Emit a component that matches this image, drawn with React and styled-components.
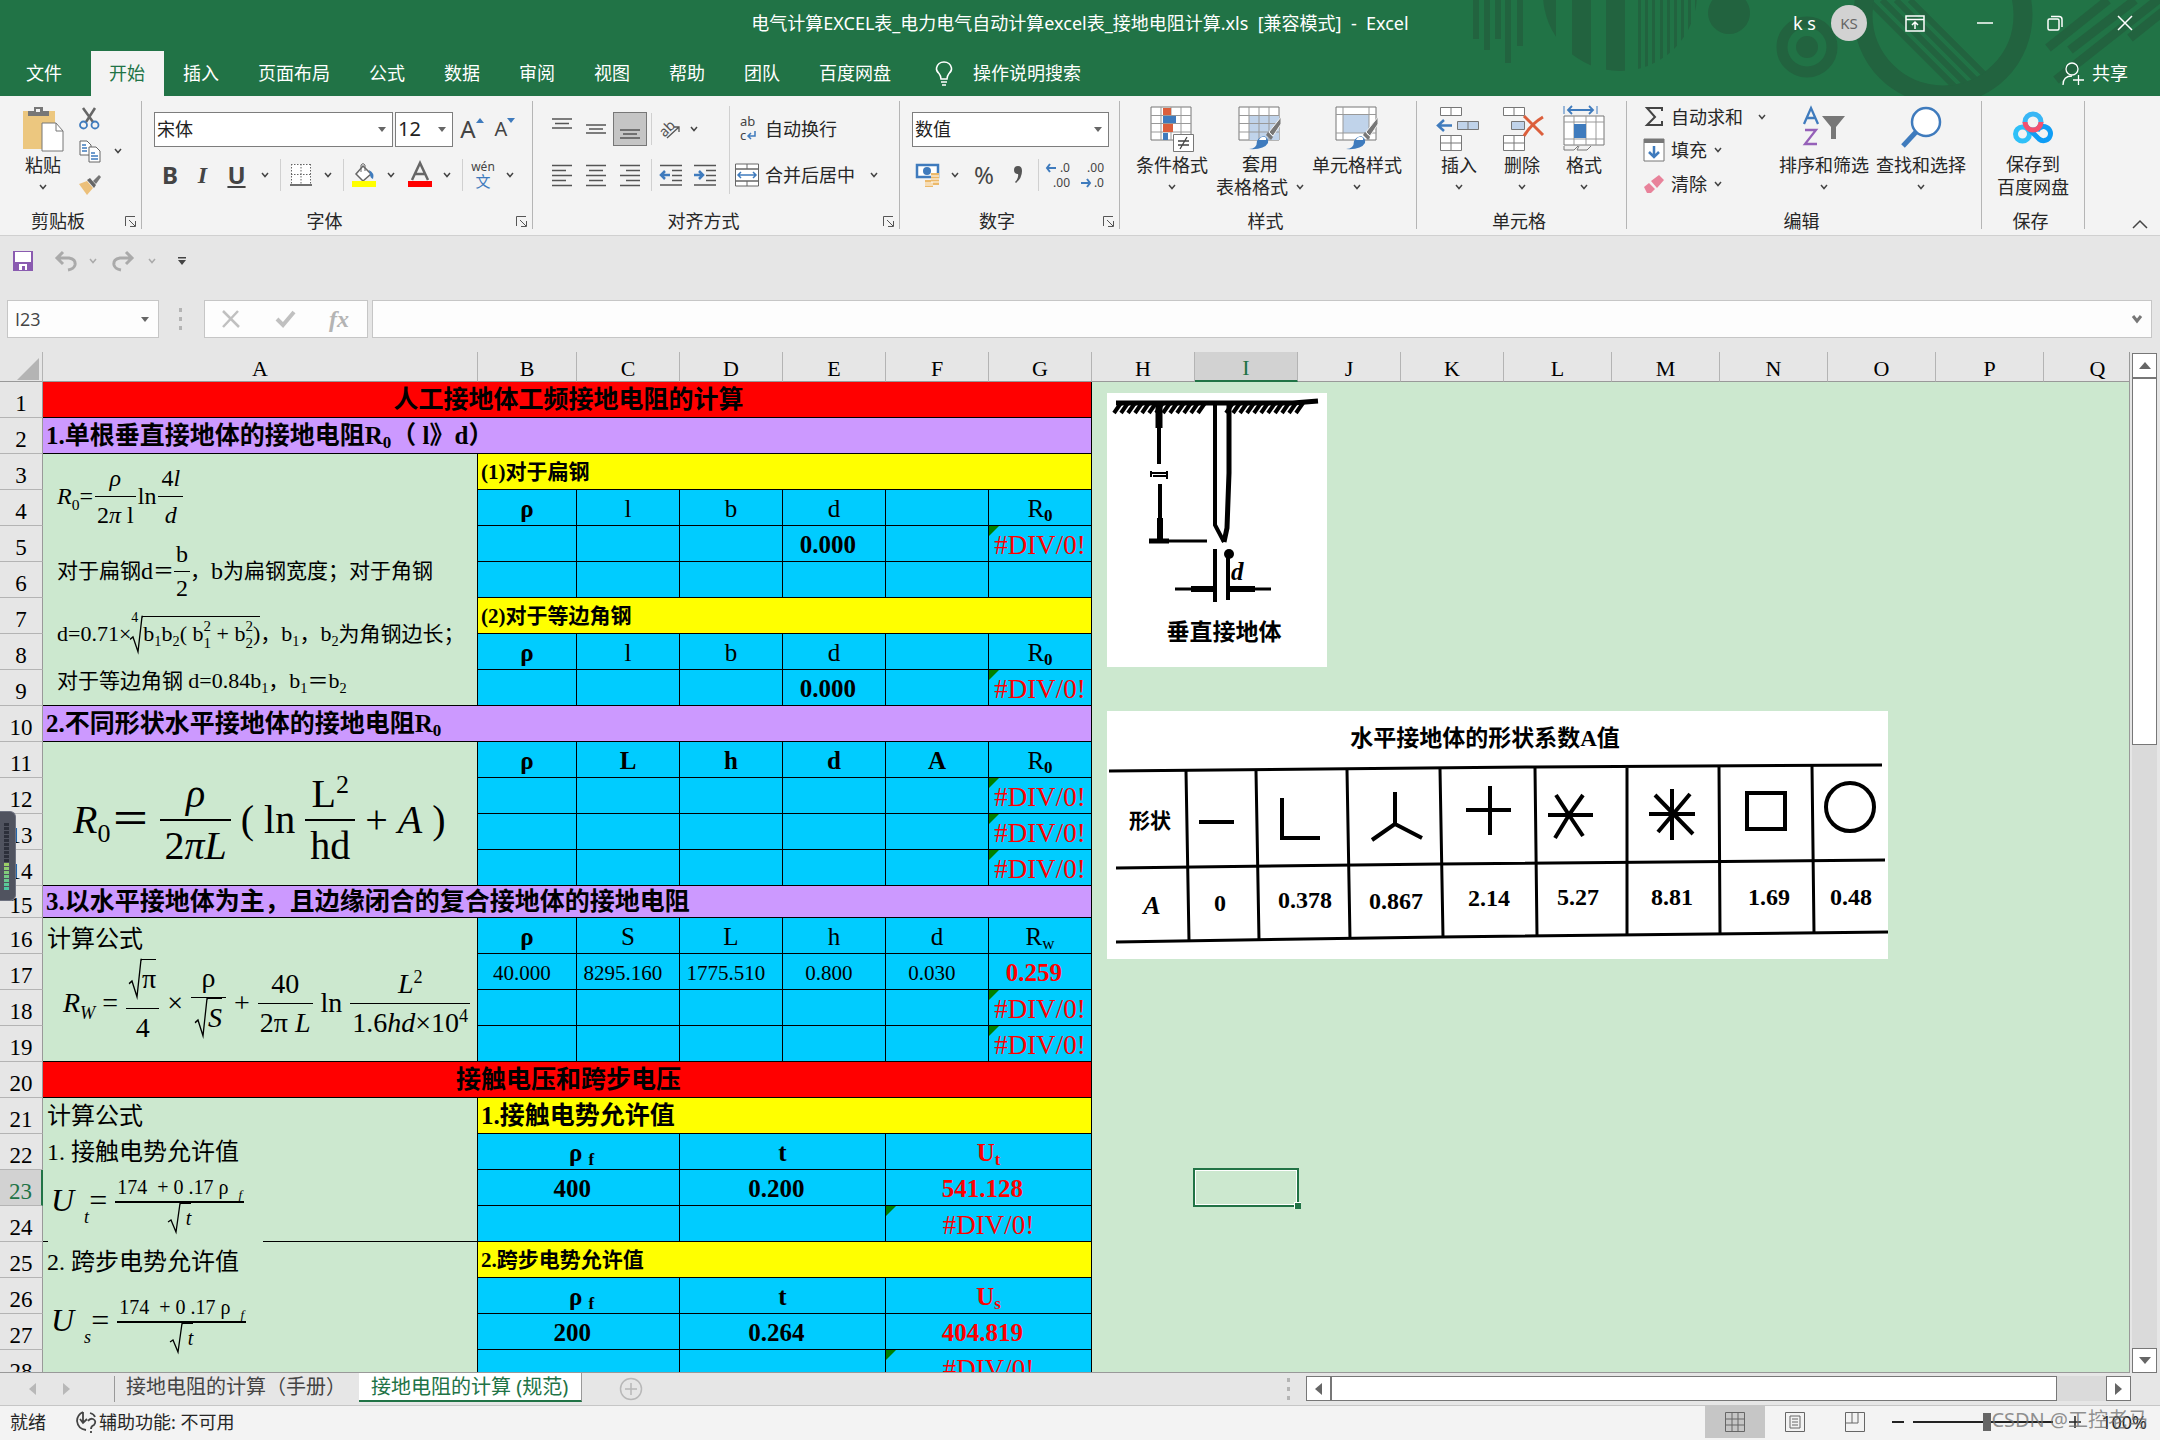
import React from 'react';
import styled, { createGlobalStyle, css } from 'styled-components';

const ui = "'Noto Sans', 'Noto Sans CJK SC', sans-serif";
const song = "'Liberation Serif', 'Noto Sans CJK SC', serif";

const GlobalStyle = createGlobalStyle`
  * { box-sizing: border-box; }
  body { margin: 0; background: #e6e6e6; }
  button, input, select { font: inherit; color: inherit; }
  button { padding: 0; border: 0; background: none; }
  svg { display: block; flex: none; overflow: visible; }
`;

const Window = styled.div`
  position: relative;
  display: flex;
  flex-direction: column;
  height: 100vh;
  overflow: hidden;
  background: #e6e6e6;
  color: #262626;
  font: 18px/24px ${ui};
`;

/* ---------- title bar and tabs ---------- */

const Header = styled.header`
  position: relative;
  flex: none;
  background: #217346;
  color: #fff;
`;

const Deco = styled.svg`
  position: absolute;
  top: 0;
  right: 0;
  overflow: hidden;
`;

const TitleBar = styled.div`
  position: relative;
  display: grid;
  grid-template-columns: 1fr auto 1fr;
  align-items: center;
  height: 51px;
  padding-bottom: 5px;
  white-space: pre;
`;

const WindowTools = styled.div`
  display: flex;
  justify-content: flex-end;
  align-items: center;
`;

const Avatar = styled.span`
  width: 36px;
  margin: 0 13px 0 15px;
  border-radius: 50%;
  background: #d2d2d2;
  color: #666;
  font-size: 15px;
  line-height: 36px;
  text-align: center;
`;

const WinButton = styled.button`
  display: flex;
  justify-content: center;
  width: 70px;
`;

const Tabs = styled.nav`
  position: relative;
  display: flex;
  height: 45px;
  line-height: 43px;
`;

const Tab = styled.button`
  padding: 0 20px 0 19px;
  ${p => p.$file && css`padding: 0 29px 0 26px;`}
  ${p => p.$active && css`
    padding: 0 19px 0 18px;
    background: #f3f3f3;
    color: #217346;
  `}
`;

const Tell = styled.button`
  display: flex;
  align-items: center;
  gap: 20px;
  margin-left: 24px;
`;

const Share = styled(Tell)`
  gap: 8px;
  margin: 0 32px 0 auto;
`;

/* ---------- ribbon ---------- */

const Ribbon = styled.div`
  display: flex;
  flex: none;
  height: 140px;
  padding: 5px 0 6px;
  background: #f3f3f3;
  border-bottom: 1px solid #d0d0d0;
`;

const GroupBox = styled.section`
  display: flex;
  flex-direction: column;
  flex: none;
  width: ${p => p.$w}px;
  padding-top: 5px;
  border-right: 1px solid #b5b5b5;
`;

const GroupBody = styled.div`
  display: flex;
  height: 92px;
  padding-left: ${p => p.$pad || 12}px;
`;

const GroupLabel = styled.div`
  display: flex;
  align-items: center;
  height: 32px;
  padding: 15px 5px 0 0;
  line-height: 16px;
  text-align: center;
  > span { flex: 1; }
`;

const LaunchButton = styled.button`
  display: flex;
  justify-content: flex-end;
  width: 20px;
`;

const Stack = styled.div`
  display: flex;
  flex-direction: column;
`;

const Row = styled.div`
  display: flex;
  align-items: center;
  height: ${p => p.$h || 46}px;
`;

const Tool = styled.button`
  display: flex;
  justify-content: center;
  align-items: center;
  flex: none;
  width: ${p => p.$w}px;
  height: 34px;
  color: ${p => p.$color || '#444'};
  font-size: ${p => p.$size || 20}px;
  ${p => p.$on && css`
    background: #c5c5c5;
    border: 1px solid #777;
  `}
`;

const TextTool = styled.button`
  display: flex;
  align-items: center;
  gap: ${p => p.$gap || 6}px;
  white-space: nowrap;
`;

const Glyph = styled.span`
  font: ${p => p.$style || 'normal'} bold 24px/30px ${p => (p.$serif ? song : ui)};
  text-decoration: ${p => (p.$line ? 'underline' : 'none')};
`;

const Divider = styled.span`
  flex: none;
  width: 1px;
  height: ${p => p.$h || 32}px;
  margin: 0 ${p => p.$m || 4}px;
  background: #d0d0d0;
`;

const Big = styled.button`
  display: flex;
  flex-direction: column;
  align-items: center;
  flex: none;
  width: ${p => p.$w}px;
  white-space: nowrap;
`;

const BigIcon = styled.span`
  display: flex;
  height: 50px;
`;

const BigLine = styled.span`
  display: flex;
  align-items: center;
  gap: 8px;
  height: 23px;
`;

const ComboBox = styled.label`
  display: flex;
  align-items: center;
  width: ${p => p.$w}px;
  height: 35px;
  margin-right: 2px;
  padding-right: 6px;
  background: #fff;
  border: 1px solid #7d7d7d;
  color: #222;
  select {
    flex: 1;
    min-width: 0;
    height: 100%;
    padding: 0 2px;
    border: 0;
    background: none;
    appearance: none;
    font-size: ${p => p.$size || 18}px;
  }
`;

const Collapse = styled.button`
  align-self: flex-end;
  margin: 0 12px 0 auto;
`;

/* ---------- quick access and formula bar ---------- */

const QuickBar = styled.div`
  display: flex;
  align-items: center;
  flex: none;
  height: 50px;
  padding-left: 6px;
`;

const FormulaBar = styled.div`
  display: flex;
  flex: none;
  height: 38px;
  margin: 14px 8px 14px 7px;
`;

const Field = styled.div`
  display: flex;
  align-items: center;
  width: ${p => p.$w}px;
  flex: ${p => (p.$w ? 'none' : 1)};
  margin-left: ${p => (p.$w ? 0 : 4)}px;
  padding: 0 9px 0 7px;
  background: #fdfdfd;
  border: 1px solid #c6c6c6;
  input {
    flex: 1;
    min-width: 0;
    padding: 0;
    border: 0;
    background: none;
    color: #444;
    font-family: 'Open Sans', sans-serif;
  }
`;

const Grip = styled.span`
  width: 3px;
  height: 23px;
  align-self: center;
  margin: ${p => p.$m || '0'};
  background: repeating-linear-gradient(#b4b4b4 0 4px, transparent 4px 9px);
`;

/* ---------- sheet ---------- */

const Main = styled.main`
  display: flex;
  flex: 1;
  min-height: 0;
`;

const SheetView = styled.div`
  position: relative;
  flex: 1;
  min-width: 0;
  overflow: hidden;
  background: #cce8cf;
  border-right: 1px solid #999;
  border-bottom: 1px solid #999;
`;

const Sheet = styled.table`
  width: 0;
  table-layout: fixed;
  border-spacing: 0;
  color: #000;
  font: 25px/30px ${song};
`;

const ColHead = styled.th`
  height: 30px;
  padding: ${p => (p.$corner ? '4px 0 0 17px' : '4px 0 0')};
  overflow: hidden;
  background: ${p => (p.$on ? '#d2d2d2' : '#e6e6e6')};
  border-right: 1px solid #b4b4b4;
  border-bottom: ${p => (p.$on ? '2px solid #217346' : '1px solid #999')};
  color: ${p => (p.$on ? '#217346' : '#000')};
  font-weight: 400;
  font-size: 22px;
  line-height: 24px;
`;

const RowHead = styled.th`
  height: ${p => p.$h || 36}px;
  padding: 8px 0 0;
  background: ${p => (p.$on ? '#d2d2d2' : '#e6e6e6')};
  border-right: ${p => (p.$on ? '2px solid #217346' : '1px solid #999')};
  border-bottom: 1px solid #b4b4b4;
  color: ${p => (p.$on ? '#217346' : '#000')};
  font-weight: 400;
  font-size: 23px;
  line-height: ${p => (p.$h === 32 ? 23 : 26)}px;
`;

const fills = { red: '#f00', purple: '#c9f', yellow: '#ff0', blue: '#0cf' };

const Cell = styled.td`
  position: relative;
  padding: ${p => (p.$fill === 'blue' ? '3px 0 0' : '0 0 0 3px')};
  background: ${p => fills[p.$fill]};
  border-right: 1px solid #000;
  border-bottom: 1px solid #000;
  color: ${p => (p.$err ? '#f00' : '#000')};
  font-weight: ${p => (p.$bold ? 700 : 400)};
  font-size: ${p => p.$size || 25}px;
  text-align: ${p => (p.$center ? 'center' : 'left')};
  white-space: pre;
  sub {
    font-size: 17px;
    line-height: 0;
    vertical-align: -4px;
  }
  ${p => p.$flag && css`
    &::before {
      content: '';
      position: absolute;
      top: 0;
      left: 0;
      border: 5px solid transparent;
      border-top-color: #008000;
      border-left-color: #008000;
    }
  `}
`;

const FormulaCell = styled.td`
  padding: 0;
  border-right: 1px solid #000;
  border-bottom: ${p => (p.$cut ? 0 : 1)}px solid #000;
  background: ${p => p.$cut && 'linear-gradient(#000, #000) 0 100% / 5px 1px no-repeat, linear-gradient(#000, #000) 220px 100% / 220px 1px no-repeat'};
  vertical-align: top;
`;

const Selected = styled.td`
  position: relative;
  &::after {
    content: '';
    position: absolute;
    inset: -2px -1px -1px -2px;
    border: 2px solid #217346;
    box-shadow: inset 0 0 0 1px #fff;
  }
`;

const Handle = styled.span`
  position: absolute;
  z-index: 1;
  right: -3px;
  bottom: -3px;
  width: 7px;
  height: 7px;
  background: #217346;
  border: solid #fff;
  border-width: 1px 0 0 1px;
`;

/* ---------- formulas ---------- */

const Line = styled.div`
  display: flex;
  align-items: center;
  gap: ${p => p.$gap || 0}px;
  height: ${p => p.$h}px;
  padding: ${p => p.$top || 0}px 0 0 ${p => p.$pad || 14}px;
  font-size: ${p => p.$size || 24}px;
  line-height: ${p => p.$lh || 30}px;
  white-space: pre;
  i { font-style: italic; }
  sub, sup { font-size: 65%; line-height: 0; }
`;

const Cjk = styled.span`
  font-size: 21px;
`;

const Large = styled.span`
  font-size: 32px;
`;

const Low = styled.span`
  display: inline-block;
  padding-top: 22px;
  font-size: 18px;
  line-height: 20px;
  vertical-align: middle;
`;

const Frac = styled.span`
  display: inline-flex;
  flex-direction: column;
  align-items: center;
  > span { padding: 0 ${p => p.$pad || 2}px; }
  > span:first-child {
    align-self: stretch;
    border-bottom: ${p => p.$bar || 1}px solid #000;
    text-align: center;
  }
`;

const RootBox = styled.span`
  display: inline-flex;
  align-items: stretch;
  > svg { height: auto; }
  > span { border-top: 1px solid #000; }
`;

const Index = styled.span`
  align-self: flex-start;
  margin-right: -8px;
  font-size: 14px;
  line-height: 28px;
`;

const Pair = styled.span`
  display: inline-flex;
  flex-direction: column;
  font-size: 15px;
  line-height: 17px;
  vertical-align: middle;
`;

function Root({ children }) {
  return (
    <RootBox>
      <svg width="13" viewBox="0 0 13 30" preserveAspectRatio="none">
        <path d="M0 19l3-2 5 12 4-28.500h1" stroke="#000" strokeWidth="1.300" fill="none" />
      </svg>
      <span>{children}</span>
    </RootBox>
  );
}

/* ---------- pictures on the sheet ---------- */

const Picture = styled.svg`
  position: absolute;
  left: 1107px;
  top: ${p => p.$top}px;
  background: #fff;
`;

const hatch = [];
for (let x = 14; x < 200; x += 7) {
  if (x < 104 || x > 124) hatch.push(`M${x} 10l-7 10`);
}

function RodPicture() {
  return (
    <Picture $top={41} width="220" height="274" viewBox="0 0 220 274" fill="none" stroke="#000">
      <path d="M9 10H186L211 8" strokeWidth="5" />
      <path d={hatch.join('')} strokeWidth="4" />
      <path d="M52 11V35" strokeWidth="7" />
      <path d="M52 35V71M53 91V125" strokeWidth="4" />
      <path d="M53 125V148" strokeWidth="6" />
      <path d="M44 78v6M60 78v8" strokeWidth="2" />
      <path d="M43 80h17M46 83h14" strokeWidth="2" />
      <path d="M42 148H62" strokeWidth="5" />
      <path d="M62 148H100" strokeWidth="3" />
      <path d="M108 11V132L117 149" strokeWidth="4" />
      <path d="M122 11V80L120 135L117 149" strokeWidth="5" />
      <path d="M108 156V209M121 160V207" strokeWidth="4" />
      <circle cx="122" cy="161" r="5" fill="#000" stroke="none" />
      <path d="M68 196H108M119 196H164" strokeWidth="3" />
      <path d="M84 196H108M121 196H148" strokeWidth="6" />
      <text x="124" y="187" fill="#000" stroke="none" fontFamily="Liberation Serif, serif" fontSize="25" fontWeight="700" fontStyle="italic">d</text>
      <text x="117" y="247" fill="#000" stroke="none" textAnchor="middle" fontFamily="Noto Sans CJK SC, sans-serif" fontSize="23" fontWeight="700">垂直接地体</text>
    </Picture>
  );
}

const factors = [[113, 193, '0'], [198, 190, '0.378'], [289, 191, '0.867'], [382, 188, '2.14'], [471, 187, '5.27'], [565, 187, '8.81'], [662, 187, '1.69'], [744, 187, '0.48']];

function ShapePicture() {
  return (
    <Picture $top={359} width="781" height="248" viewBox="0 0 781 248" fill="none" stroke="#000" strokeWidth="3">
      <path d="M2 60L428 56L775 54M9 157L333 153L778 149M9 231L333 226L781 221" />
      <path d="M79 60L82 230M149 60L152 229M240 59L243 228M333 58L336 226M428 57L430 225M520 57V224M612 56L613 222M705 55L707 222" />
      <path d="M92 111h35M175 87v40h38M288 81v32l-23 16M288 113l27 14M383 75v49M359 99h45M441 104h45M449 84l13 20 14-20M462 104l-14 23M462 104l14 21M565 78v51M542 103h46M548 84l38 39M583 83l-32 38" strokeWidth="4" />
      <rect x="640" y="82" width="38" height="36" strokeWidth="4" />
      <circle cx="743" cy="96" r="24" strokeWidth="4" />
      <g fill="#000" stroke="none" textAnchor="middle" fontWeight="700" fontFamily="Liberation Serif, Noto Sans CJK SC, serif">
        <text x="378" y="35" fontSize="23">水平接地体的形状系数A值</text>
        <text x="43" y="117" fontSize="21">形状</text>
        <text x="45" y="203" fontSize="26" fontStyle="italic">A</text>
        {factors.map(([x, y, t]) => <text key={x} x={x} y={y + 7} fontSize="24">{t}</text>)}
      </g>
    </Picture>
  );
}

/* ---------- scroll bars, sheet tabs, status ---------- */

const VScroll = styled.div`
  display: flex;
  flex-direction: column;
  flex: none;
  width: 25px;
  margin: 1px 3px 0 2px;
  background: #dadada;
`;

const ScrollBox = styled.button`
  display: flex;
  justify-content: center;
  align-items: center;
  flex: none;
  width: 25px;
  height: 25px;
  background: #fff;
  border: 1px solid #777;
`;

const VThumb = styled.div`
  height: 36%;
  margin-bottom: auto;
  background: #fff;
  border: 1px solid #777;
`;

const SheetBar = styled.div`
  display: flex;
  flex: none;
  height: 33px;
  padding: 0 29px 0 15px;
  border-bottom: 1px solid #c6c6c6;
  font-size: 20px;
  line-height: 25px;
  white-space: pre;
`;

const NavArrow = styled.button`
  width: ${p => p.$w || 34}px;
  display: flex;
  align-items: center;
  justify-content: center;
`;

const TabEdge = styled.span`
  width: 1px;
  height: 26px;
  margin: 3px 0 0 31px;
  background: #999;
`;

const SheetTab = styled.button`
  flex: none;
  height: 29px;
  padding: 0 0 2px 11px;
  color: #444;
  ${p => p.$on && css`
    margin-left: 13px;
    padding: 0 13px 0 12px;
    background: #fff;
    border-right: 1px solid #999;
    border-bottom: 2px solid #217346;
    color: #217346;
  `}
`;

const HScroll = styled.div`
  display: flex;
  flex: none;
  width: 39%;
  height: 25px;
  margin: 3px 0 0 16px;
  background: #dadada;
`;

const HThumb = styled.div`
  width: 88%;
  margin-right: auto;
  background: #fff;
  border: 1px solid #777;
`;

const Status = styled.footer`
  position: relative;
  display: flex;
  align-items: center;
  flex: none;
  height: 34px;
  padding: 0 13px 2px 10px;
  background: #f3f3f3;
  line-height: 28px;
  white-space: pre;
`;

const Access = styled.span`
  display: flex;
  align-items: center;
  gap: 2px;
  margin: 0 auto 0 29px;
`;

const ViewButton = styled.button`
  display: flex;
  align-items: center;
  justify-content: center;
  width: 60px;
  height: 32px;
  background: ${p => (p.$on ? '#c6c6c6' : 'none')};
`;

const Zoom = styled.input`
  width: 140px;
  height: 18px;
  margin: 0 16px 0 3px;
  appearance: none;
  background: linear-gradient(#222, #222) center / 100% 2px no-repeat;
  &::-webkit-slider-thumb {
    appearance: none;
    width: 8px;
    height: 18px;
    background: #666;
  }
`;

const Percent = styled.output`
  margin-left: 20px;
`;

const Watermark = styled.span`
  position: absolute;
  right: 12px;
  top: 0;
  color: rgba(110, 110, 110, .75);
  font-size: 20px;
`;

const Meter = styled.div`
  position: absolute;
  left: 0;
  top: 811px;
  width: 16px;
  height: 90px;
  padding: 11px 6px 9px 4px;
  background: #50535f;
  border: 1px solid #6e7280;
  border-left: 0;
  border-radius: 0 6px 6px 0;
  &::before {
    content: '';
    display: block;
    height: 100%;
    background:
      repeating-linear-gradient(transparent 0 3px, #50535f 3px 4px),
      linear-gradient(#2c2f3a 57%, #a4cf60 57%, #45c7a8);
  }
`;

/* ---------- icons ---------- */

const Icon = ({ w, h, box, children, ...rest }) => (
  <svg width={w} height={h} viewBox={box || `0 0 ${w} ${h}`} fill="none" {...rest}>{children}</svg>
);

const Chev = ({ c = '#444' }) => (
  <Icon w={8} h={6} stroke={c} strokeWidth="1.500"><path d="M1 1l3 3.500L7 1" /></Icon>
);

const Caret = () => <Icon w={8} h={5}><path d="M0 0h8L4 5z" fill="#666" /></Icon>;

const Launcher = () => (
  <Icon w={11} h={11} stroke="#555"><path d="M.5 10V.5H10M4 4l6 6M10.500 5v5.500H5" /></Icon>
);

const Lines = ({ rows, h = 22 }) => (
  <Icon w={22} h={h} stroke="#555" strokeWidth="1.300">
    <path d={rows.map(([x, y, w]) => `M${x} ${y}h${w}`).join('')} />
  </Icon>
);

const alignRows = k => [0, 1, 2, 3, 4].map(i => {
  const w = i % 2 ? 14 : 20;
  return [k === 'l' ? 1 : k === 'c' ? 1 + (20 - w) / 2 : 21 - w, 1.5 + i * 5, w];
});

const PasteIcon = () => (
  <Icon w={42} h={46}>
    <path d="M1 5h32v38H1z" fill="#ecc77f" />
    <path d="M6 10V5h6V1h9v4h6v5z" fill="#777" /><path d="M14 3h4v3h-4z" fill="#f3f3f3" />
    <path d="M20 17h14l7 8v20H20z" fill="#fff" stroke="#777" /><path d="M34 17v8h7" stroke="#777" />
  </Icon>
);

const CutIcon = () => (
  <Icon w={21} h={23}>
    <path d="M4 1l10 14M16 1L7 15" stroke="#666" strokeWidth="2.500" />
    <circle cx="4.500" cy="18" r="3.500" stroke="#3f7bbd" strokeWidth="1.800" />
    <circle cx="16" cy="18" r="3.500" stroke="#3f7bbd" strokeWidth="1.800" />
  </Icon>
);

const CopyIcon = () => (
  <Icon w={22} h={23}>
    <path d="M1 1h7l4 4v10H1z" fill="#fff" stroke="#666" />
    <path d="M10 7h7l4 4v11H10z" fill="#fff" stroke="#666" />
    <path d="M3 5h4M3 8h5M3 11h5M12 13h4M12 16h7M12 19h7" stroke="#3f7bbd" strokeWidth="1.300" />
  </Icon>
);

const BrushIcon = () => (
  <Icon w={24} h={22}>
    <path d="M1 10l8-3 6 7-6 7z" fill="#ecc07a" />
    <path d="M9 6l3-2 6 7-2 3z" fill="#666" /><path d="M15 7l6-6 2 2-5 7z" fill="#777" />
  </Icon>
);

const BorderIcon = () => (
  <Icon w={22} h={24}>
    <path d="M1 1h20v20H1z" fill="#fff" />
    <path d="M1 1.500h20M1 11.500h20M1.500 1v21M11 1v21M20.500 1v21" stroke="#666" strokeDasharray="1.500 1.500" />
    <path d="M0 22h22" stroke="#444" strokeWidth="1.500" />
  </Icon>
);

const FillIcon = () => (
  <Icon w={24} h={26}>
    <path d="M11 4l8 8-8 7-7-7z" fill="#fff" stroke="#666" strokeWidth="1.500" />
    <path d="M9 10V3q2-3 4 0v6" stroke="#666" />
    <path d="M17 8q6 3 4 9-3-1-3-5z" fill="#3f7bbd" /><path d="M0 19h24v6H0z" fill="#ff0" />
  </Icon>
);

const TableIcon = ({ cols = 4 }) => (
  <>
    <path d="M1 1h40v33H1z" fill="#fff" stroke="#777" />
    {cols === 4 && <path d="M11 10h30v24H11z" fill="#c0d3ea" />}
    <path d="M1 9.500h40M1 17.500h40M1 26h40M11 1v33M21 1v33M31 1v33" stroke="#999" />
  </>
);

const PaintBrush = () => (
  <>
    <path d="M43 11L31 26l4 4 8-12z" fill="#777" stroke="#f3f3f3" />
    <path d="M30 26l5 5-2 3-5-5z" fill="#777" />
    <path d="M11 43q8 0 8-8 2-4 7-5 5 2 4 7-4 7-19 6z" fill="#3f7bbd" />
    <path d="M21 34q2-4 6-3 2 1 1 3z" fill="#fff" />
  </>
);

const CondIcon = () => (
  <Icon w={45} h={46}>
    <TableIcon cols={0} />
    <path d="M13 2h8v7h-8zM13 18h10v8H13z" fill="#dc5f3c" /><path d="M13 10h13v7H13zM13 27h5v7h-5z" fill="#3f7bbd" />
    <path d="M23.500 28.500h20v17h-20z" fill="#fff" stroke="#777" />
    <path d="M28 35h11M28 39h11M37 31l-7 12" stroke="#444" strokeWidth="1.300" />
  </Icon>
);

const CellsIcon = ({ kind }) => (
  <Icon w={44} h={46}>
    <path d="M3.500 1.500h21v8h-21zM14 1.500v8M3.500 29.500h21v15h-21zM3.500 37h21M14 29.500v15" fill="#fff" stroke="#777" />
    {kind === 'insert' ? (
      <>
        <path d="M20.500 15.500h21v8h-21zM31 15.500v8" fill="#c0d3ea" stroke="#777" />
        <path d="M1 19.500h14M7 14l-6 5.500 6 5.500" stroke="#3f7bbd" strokeWidth="2.500" />
      </>
    ) : (
      <>
        <path d="M11.500 15.500h13v8h-13z" fill="#c0d3ea" stroke="#777" />
        <path d="M24 10q8 8 19 19M43 11Q31 18 24 30" stroke="#dc5f3c" strokeWidth="3" />
      </>
    )}
  </Icon>
);

const FormatIcon = () => (
  <Icon w={42} h={46}>
    <path d="M1 0v8M34 0v8" stroke="#3f7bbd" /><path d="M5 4h25M9 0L5 4l4 4M26 0l4 4-4 4" stroke="#3f7bbd" strokeWidth="1.800" />
    <path d="M1 10h40v29H1z" fill="#fff" stroke="#777" />
    <path d="M1 16h40M1 33h40M11 10v29M23 10v29M33 10v29" stroke="#999" />
    <path d="M11 18h12v14H11z" fill="#3f7bbd" /><path d="M1 40v4h10l4-4M16 40l-2 4h10l4-4" stroke="#777" />
  </Icon>
);

const CloudIcon = () => (
  <>
    <circle cx="20" cy="11" r="8" stroke="#39b6f5" strokeWidth="5" />
    <circle cx="9.500" cy="23" r="7" stroke="#2fc0f8" strokeWidth="5" />
    <path d="M24 20a7 7 0 1 1 2 8l-9-9" stroke="#0f9df5" strokeWidth="5" />
    <path d="M12 11a8 8 0 0 0 16 0" stroke="#f5506e" strokeWidth="5" />
  </>
);

const MoneyIcon = () => (
  <Icon w={24} h={26}>
    <path d="M1 3h21v12H1z" fill="#fff" stroke="#3f7bbd" strokeWidth="2.500" />
    <ellipse cx="11" cy="9" rx="4" ry="4" fill="#3f7bbd" />
    <path d="M15 11h8v12h-8zM9 18h8v7H9z" fill="#ecb96a" />
    <path d="M15 14h8M15 17h8M15 20h8M9 21h8M9 23h8" stroke="#fff" />
  </Icon>
);

/* ---------- parts ---------- */

const ChevTool = ({ w, c }) => <Tool $w={w} aria-label="更多"><Chev c={c} /></Tool>;

function Group({ w, label, pad, plain, children }) {
  return (
    <GroupBox $w={w}>
      <GroupBody $pad={pad}>{children}</GroupBody>
      <GroupLabel>
        <span>{label}</span>
        {!plain && <LaunchButton aria-label={`${label}设置`}><Launcher /></LaunchButton>}
      </GroupLabel>
    </GroupBox>
  );
}

function BigButton({ w, icon, label, second, arrow = true }) {
  return (
    <Big $w={w}>
      <BigIcon>{icon}</BigIcon>
      <BigLine>{label}</BigLine>
      <BigLine>{second}{arrow && <Chev />}</BigLine>
    </Big>
  );
}

function Combo({ w, size, label, value }) {
  return (
    <ComboBox $w={w} $size={size}>
      <select aria-label={label} defaultValue={value}><option>{value}</option></select>
      <Caret />
    </ComboBox>
  );
}

const bars = [[1473, 39], [1484, 50], [1495, 39], [1505, 63], [1517, 46]];
const thin = [1638, 1645, 1652, 1660, 1667, 1674, 1681, 1688, 1695];

function TopBar() {
  return (
    <Header>
      <Deco width="690" height="96" viewBox="1470 0 690 96" fill="#22633f">
        <defs>
          <clipPath id="disc"><circle cx="1620" cy="-6" r="77" /></clipPath>
          <clipPath id="hole"><circle cx="1943" cy="15" r="71" /></clipPath>
        </defs>
        {bars.map(([x, h]) => <rect key={x} x={x} width="6" height={h} />)}
        <g clipPath="url(#disc)">
          <path d="M1543 0h13v50h-13zM1572 0h19v80h-19zM1606 0h19v80h-19z" />
          {thin.map(x => <rect key={x} x={x} width="3" height="80" />)}
        </g>
        <circle cx="1729" cy="13" r="21" />
        <circle cx="1807" cy="47" r="25" fill="none" stroke="#22633f" strokeWidth="11" />
        <circle cx="1807" cy="47" r="11" />
        <circle cx="1943" cy="15" r="80" fill="none" stroke="#22633f" strokeWidth="19" />
        <g clipPath="url(#hole)" stroke="#22633f" strokeWidth="6">
          <path d="M1868 0l92 92M1882 0l92 92M1896 0l92 92M1910 0l92 92" />
        </g>
        <path d="M2108 0L2048 48M2135 0L2070 50M2165 -6L2056 80M2175 2L2130 38" stroke="#22633f" strokeWidth="9" />
      </Deco>
      <TitleBar>
        <span />
        <span>电气计算EXCEL表_电力电气自动计算excel表_接地电阻计算.xls  [兼容模式]  -  Excel</span>
        <WindowTools>
          k s
          <Avatar>KS</Avatar>
          <WinButton aria-label="功能区显示选项">
            <Icon w={20} h={17} stroke="#fff" strokeWidth="1.500"><path d="M1 1h18v15H1zM1 4.500h18M10 14V7M7 10l3-3 3 3" /></Icon>
          </WinButton>
          <WinButton aria-label="最小化"><Icon w={16} h={4} stroke="#fff" strokeWidth="1.500"><path d="M0 2h16" /></Icon></WinButton>
          <WinButton aria-label="还原">
            <Icon w={16} h={16} stroke="#fff" strokeWidth="1.500"><rect x="1" y="4" width="11" height="11" rx="1.500" /><path d="M4 1.500h8q3 0 3 3V12" /></Icon>
          </WinButton>
          <WinButton aria-label="关闭"><Icon w={16} h={16} stroke="#fff" strokeWidth="1.500"><path d="M1 1l14 14M15 1L1 15" /></Icon></WinButton>
        </WindowTools>
      </TitleBar>
      <Tabs>
        <Tab $file>文件</Tab>
        <Tab $active>开始</Tab>
        {['插入', '页面布局', '公式', '数据', '审阅', '视图', '帮助', '团队', '百度网盘'].map(t => <Tab key={t}>{t}</Tab>)}
        <Tell>
          <Icon w={18} h={25} stroke="#fff" strokeWidth="1.500">
            <path d="M6 18q0-3-2-5.500Q1 10 1.500 7 3 1 9 1t7.500 6q.5 3-2.500 5.500-2 2.500-2 5.500zM6 21h6M7 24h4" />
          </Icon>
          操作说明搜索
        </Tell>
        <Share>
          <Icon w={22} h={24} stroke="#fff" strokeWidth="1.300">
            <circle cx="10" cy="7" r="6" /><path d="M1 23q0-9 9-9M11 18h11M16.500 13v10" />
          </Icon>
          共享
        </Share>
      </Tabs>
    </Header>
  );
}

function RibbonBar() {
  return (
    <Ribbon>
      <Group w={142} label="剪贴板" pad={13}>
        <BigButton w={60} icon={<PasteIcon />} label="粘贴" />
        <Stack>
          <Row $h={24}><Tool $w={32} aria-label="剪切"><CutIcon /></Tool></Row>
          <Row $h={44}><Tool $w={34} aria-label="复制"><CopyIcon /></Tool><ChevTool w={22} /></Row>
          <Row $h={26}><Tool $w={34} aria-label="格式刷"><BrushIcon /></Tool></Row>
        </Stack>
      </Group>

      <Group w={391} label="字体">
        <Stack>
          <Row>
            <Combo w={239} label="字体" value="宋体" />
            <Combo w={58} size={20} label="字号" value="12" />
            <Tool $w={34} $size={24} aria-label="增大字号">A<Icon w={8} h={22}><path d="M0 5h8L4 0z" fill="#3f7bbd" /></Icon></Tool>
            <Tool $w={32} aria-label="减小字号">A<Icon w={8} h={22}><path d="M0 0h8L4 5z" fill="#3f7bbd" /></Icon></Tool>
          </Row>
          <Row>
            <Tool $w={32}><Glyph>B</Glyph></Tool>
            <Tool $w={33}><Glyph $serif $style="italic">I</Glyph></Tool>
            <Tool $w={35}><Glyph $line>U</Glyph></Tool>
            <ChevTool w={22} />
            <Divider />
            <Tool $w={31} aria-label="边框"><BorderIcon /></Tool>
            <ChevTool w={24} />
            <Divider $m={3} />
            <Tool $w={34} aria-label="填充颜色"><FillIcon /></Tool>
            <ChevTool w={20} />
            <Tool $w={38} aria-label="字体颜色">
              <Icon w={24} h={26}><path d="M4 18L12 1l8 17M7 12h10" stroke="#666" strokeWidth="2.500" /><path d="M0 19h24v6H0z" fill="#f00" /></Icon>
            </Tool>
            <ChevTool w={16} />
            <Divider $m={7} />
            <Tool $w={26} aria-label="拼音指南">
              <Icon w={26} h={34} fontFamily="Noto Sans, Noto Sans CJK SC, sans-serif">
                <text x="13" y="13" fontSize="12" textAnchor="middle" fill="#444">wén</text>
                <text x="13" y="29" fontSize="15" textAnchor="middle" fill="#3f7bbd">文</text>
              </Icon>
            </Tool>
            <ChevTool w={28} />
          </Row>
        </Stack>
      </Group>

      <Group w={367} label="对齐方式">
        <Stack>
          <Row>
            <Tool $w={34} aria-label="顶端对齐"><Lines rows={[[1, 1, 20], [4, 5.5, 14], [1, 10, 20]]} /></Tool>
            <Tool $w={34} aria-label="垂直居中"><Lines rows={[[1, 7, 20], [4, 11, 14], [1, 15, 20]]} /></Tool>
            <Tool $w={34} $on aria-label="底端对齐"><Lines rows={[[1, 12, 20], [4, 16, 14], [1, 20, 20]]} /></Tool>
            <Divider />
            <Tool $w={30} aria-label="方向">
              <Icon w={22} h={22}><text x="0" y="15" fontSize="14" fill="#555" fontFamily="Noto Sans, sans-serif" transform="rotate(-45 8 12)">ab</text><path d="M7 20L19 9M14 9h5v5" stroke="#555" strokeWidth="1.300" /></Icon>
            </Tool>
            <ChevTool w={16} />
          </Row>
          <Row>
            <Tool $w={34} aria-label="左对齐"><Lines rows={alignRows('l')} /></Tool>
            <Tool $w={34} aria-label="居中"><Lines rows={alignRows('c')} /></Tool>
            <Tool $w={34} aria-label="右对齐"><Lines rows={alignRows('r')} /></Tool>
            <Divider />
            <Tool $w={30} aria-label="减少缩进">
              <Icon w={22} h={22} stroke="#555" strokeWidth="1.300"><path d="M0 1.500h22M12 6.500h10M12 11.500h10M12 16.500h10M0 21h22" /><path d="M1 11h9M5 7l-4 4 4 4" stroke="#3f7bbd" strokeWidth="2.500" /></Icon>
            </Tool>
            <Tool $w={38} aria-label="增加缩进">
              <Icon w={22} h={22} stroke="#555" strokeWidth="1.300"><path d="M0 1.500h22M12 6.500h10M12 11.500h10M12 16.500h10M0 21h22" /><path d="M0 11h9M5 7l4 4-4 4" stroke="#3f7bbd" strokeWidth="2.500" /></Icon>
            </Tool>
          </Row>
        </Stack>
        <Divider $h={88} $m={5} />
        <Stack>
          <Row>
            <TextTool $gap={4}>
              <Icon w={26} h={34} fontFamily="Noto Sans, sans-serif" fontSize="13"><text x="5" y="14" fill="#444">ab</text><text x="5" y="28" fill="#444">c</text><path d="M20 19v5h-6M16 21l-3 3 3 3" stroke="#3f7bbd" strokeWidth="1.500" /></Icon>
              自动换行
            </TextTool>
          </Row>
          <Row>
            <TextTool>
              <Icon w={24} h={24}><path d="M.5 1h23v5H.5zM12 1v5M.5 18h23v5H.5zM12 18v5M.5 6h23v12H.5z" fill="#fff" stroke="#666" /><path d="M3 12h18M6 9l-3 3 3 3M18 9l3 3-3 3" stroke="#3f7bbd" strokeWidth="1.500" /></Icon>
              合并后居中
            </TextTool>
            <ChevTool w={38} />
          </Row>
        </Stack>
      </Group>

      <Group w={220} label="数字">
        <Stack>
          <Row><Combo w={197} label="数字格式" value="数值" /></Row>
          <Row>
            <Tool $w={31} aria-label="会计数字格式"><MoneyIcon /></Tool>
            <ChevTool w={24} />
            <Tool $w={34} $size={24}>%</Tool>
            <Tool $w={34} aria-label="千位分隔样式"><Icon w={10} h={20}><path d="M1 5q0-4 4-4t4 5q0 7-6 12l-1-1q4-4 3-8-4 0-4-4z" fill="#555" /></Icon></Tool>
            <Divider $m={3} />
            {[0, 1].map(k => (
              <Tool key={k} $w={34} aria-label={k ? '减少小数位数' : '增加小数位数'}>
                <Icon w={28} h={34} fontFamily="Noto Sans, sans-serif" fontSize="12">
                  <text x="25" y="14" textAnchor="end" fill="#444">{k ? '.00' : '.0'}</text>
                  <text x="25" y="29" textAnchor="end" fill="#444">{k ? '.0' : '.00'}</text>
                  <path d={k ? 'M2 25h9M8 21l3 4-3 4' : 'M2 10h9M5 6l-3 4 3 4'} stroke="#3f7bbd" strokeWidth="2" />
                </Icon>
              </Tool>
            ))}
          </Row>
        </Stack>
      </Group>

      <Group w={297} label="样式" plain>
        <BigButton w={80} icon={<CondIcon />} label="条件格式" />
        <BigButton w={96} icon={<Icon w={44} h={46}><TableIcon /><PaintBrush /></Icon>} label="套用" second="表格格式" />
        <BigButton w={98} label="单元格样式" icon={(
          <Icon w={44} h={46}>
            <path d="M1 1h40v33H1z" fill="#fff" stroke="#777" /><path d="M8 9h26v18H8z" fill="#c0d3ea" />
            <path d="M1 8.500h40M1 27h40M8 1v33M34 1v33" stroke="#999" /><PaintBrush />
          </Icon>
        )} />
      </Group>

      <Group w={210} label="单元格" plain pad={10}>
        <BigButton w={64} icon={<CellsIcon kind="insert" />} label="插入" />
        <BigButton w={62} icon={<CellsIcon />} label="删除" />
        <BigButton w={62} icon={<FormatIcon />} label="格式" />
      </Group>

      <Group w={355} label="编辑" plain pad={16}>
        <Stack>
          <Row $h={22}>
            <TextTool><Icon w={22} h={22}><path d="M19 5V2H4l8 9-8 8h15v-4" stroke="#444" strokeWidth="2" /></Icon>自动求和</TextTool>
            <ChevTool w={38} />
          </Row>
          <Row $h={44}>
            <TextTool><Icon w={22} h={24}><path d="M1 1h20v22H1z" fill="#fff" stroke="#777" /><path d="M1 1h20v4H1z" fill="#777" /><path d="M11 8v11M6 14l5 5 5-5" stroke="#3f7bbd" strokeWidth="2.500" /></Icon>填充</TextTool>
            <ChevTool w={22} />
          </Row>
          <Row $h={24}>
            <TextTool><Icon w={22} h={20}><path d="M1 13l5-4 6 6-4 4H4zM8 7l8-6 5 5-7 8z" fill="#e8829a" /></Icon>清除</TextTool>
            <ChevTool w={22} />
          </Row>
        </Stack>
        <BigButton w={86} label="排序和筛选" icon={(
          <Icon w={44} h={44}>
            <path d="M2 18L9 2l7 16M5 12h8" stroke="#3f7bbd" strokeWidth="2.300" />
            <path d="M3 24h11L3 38h12" stroke="#9560b8" strokeWidth="2.300" />
            <path d="M20 10h23l-9 11v12h-5V21z" fill="#777" />
          </Icon>
        )} />
        <BigButton w={108} label="查找和选择" icon={(
          <Icon w={42} h={44}><circle cx="26" cy="16" r="14" fill="#fff" stroke="#3f7bbd" strokeWidth="2.500" /><path d="M16 26L3 40" stroke="#3f7bbd" strokeWidth="5" /></Icon>
        )} />
      </Group>

      <Group w={103} label="保存" plain pad={6}>
        <BigButton w={90} icon={<Icon w={40} h={40} box="0 -5 40 40"><CloudIcon /></Icon>} label="保存到" second="百度网盘" arrow={false} />
      </Group>
      <Collapse aria-label="折叠功能区"><Icon w={16} h={10} stroke="#444" strokeWidth="1.500"><path d="M1 9l7-7 7 7" /></Icon></Collapse>
    </Ribbon>
  );
}

const Blank = ({ n }) => Array.from({ length: n }, (_, i) => <Cell key={i} $fill="blue" />);
const Head = ({ items, bold }) => items.map((t, i) => <Cell key={i} $fill="blue" $center $bold={bold || t === 'ρ'}>{t}</Cell>);
const Err = ({ span }) => <Cell colSpan={span} $fill="blue" $center $err $flag $size={27}>#DIV/0!</Cell>;
const R0 = () => <Cell $fill="blue" $center>R<sub><b>0</b></sub></Cell>;

// the number format leaves room for a closing sign after each value
const Num = ({ span, err, v }) => <Cell colSpan={span} $fill="blue" $center $bold $err={err}>{`${v}  `}</Cell>;

const StepFormula = ({ sign }) => (
  <Line $h={72} $pad={8} $gap={8} $lh={28} $size={20}>
    <span><Large><i>U</i></Large>  <Low><i>{sign}</i></Low><Large>=</Large></span>
    <Frac $bar={2}>
      <span>174  + 0 .17 ρ  <sub><i>f</i></sub></span>
      <span><Root><i> t</i></Root></span>
    </Frac>
  </Line>
);

const widths = [43, 435, 99, ...Array(9).fill(103), ...Array(6).fill(108)];

const rows = [
  <Cell colSpan={7} $fill="red" $center $bold>人工接地体工频接地电阻的计算</Cell>,
  <Cell colSpan={7} $fill="purple" $bold>1.单根垂直接地体的接地电阻R<sub>0</sub>（ l》d）</Cell>,
  <>
    <FormulaCell rowSpan={7}>
      <Line $h={84} $gap={2} $lh={36}>
        <span><i>R</i><sub>0</sub>=</span>
        <Frac><span><i>ρ</i></span><span>2<i>π</i> l</span></Frac>
        ln
        <Frac $pad={3}><span>4<i>l</i></span><span><i>d</i></span></Frac>
      </Line>
      <Line $h={66} $lh={33}>
        <Cjk>对于扁钢</Cjk>d<Cjk>＝</Cjk>
        <Frac><span>b</span><span>2</span></Frac>
        <Cjk>，</Cjk>b<Cjk>为扁钢宽度；对于角钢</Cjk>
      </Line>
      <Line $h={60} $size={22} $lh={34}>
        d=0.71×<Index>4</Index>
        <Root>b<sub>1</sub>b<sub>2</sub>( b<Pair><span>2</span><span>1</span></Pair> + b<Pair><span>2</span><span>2</span></Pair>)</Root>
        <Cjk>，</Cjk><span>b<sub>1</sub></span><Cjk>，</Cjk><span>b<sub>2</sub></span><Cjk>为角钢边长；</Cjk>
      </Line>
      <Line $h={34} $size={22}>
        <Cjk>对于等边角钢 </Cjk><span>d=0.84b<sub>1</sub><Cjk>，</Cjk>b<sub>1</sub><Cjk>＝</Cjk>b<sub>2</sub></span>
      </Line>
    </FormulaCell>
    <Cell colSpan={6} $fill="yellow" $bold $size={21}>(1)对于扁钢</Cell>
  </>,
  <><Head items={['ρ', 'l', 'b', 'd', '']} /><R0 /></>,
  <><Blank n={3} /><Num v="0.000" /><Blank n={1} /><Err /></>,
  <Blank n={6} />,
  <Cell colSpan={6} $fill="yellow" $bold $size={21}>(2)对于等边角钢</Cell>,
  <><Head items={['ρ', 'l', 'b', 'd', '']} /><R0 /></>,
  <><Blank n={3} /><Num v="0.000" /><Blank n={1} /><Err /></>,
  <Cell colSpan={7} $fill="purple" $bold>2.不同形状水平接地体的接地电阻R<sub>0</sub></Cell>,
  <>
    <FormulaCell rowSpan={4}>
      <Line $h={142} $top={14} $size={40} $lh={50} $gap={10} $pad={30}>
        <span><i>R</i><sub>0</sub>＝</span>
        <Frac $bar={2} $pad={4}><span><i>ρ</i></span><span>2<i>πL</i></span></Frac>
        <span>( ln</span>
        <Frac $bar={2} $pad={5}><span>L<sup>2</sup></span><span>hd</span></Frac>
        <span>+ <i>A</i> )</span>
      </Line>
    </FormulaCell>
    <Head bold items={['ρ', 'L', 'h', 'd', 'A']} /><R0 />
  </>,
  <><Blank n={5} /><Err /></>,
  <><Blank n={5} /><Err /></>,
  <><Blank n={5} /><Err /></>,
  <Cell colSpan={7} $fill="purple" $bold>3.以水平接地体为主，且边缘闭合的复合接地体的接地电阻</Cell>,
  <>
    <FormulaCell rowSpan={4}>
      <Line $h={42} $pad={4} $size={24}>计算公式</Line>
      <Line $h={86} $size={28} $lh={38} $gap={8} $pad={20}>
        <span><i>R<sub>W</sub></i> =</span>
        <Frac $pad={3}><span><Root>π</Root></span><span>4</span></Frac>
        ×
        <Frac $pad={4}><span>ρ</span><span><Root><i>S</i></Root></span></Frac>
        +
        <Frac><span>40</span><span>2π <i>L</i></span></Frac>
        ln
        <Frac><span><i>L</i><sup>2</sup></span><span>1.6<i>hd</i>×10<sup>4</sup></span></Frac>
      </Line>
    </FormulaCell>
    <Head items={['ρ', 'S', 'L', 'h', 'd']} />
    <Cell $fill="blue" $center>R<sub>w</sub></Cell>
  </>,
  <>
    {['40.000', '8295.160', '1775.510', '0.800', '0.030'].map(t => <Cell key={t} $fill="blue" $center $size={21}>{`${t}  `}</Cell>)}
    <Num err v="0.259" />
  </>,
  <><Blank n={5} /><Err /></>,
  <><Blank n={5} /><Err /></>,
  <Cell colSpan={7} $fill="red" $center $bold>接触电压和跨步电压</Cell>,
  <>
    <FormulaCell rowSpan={4} $cut>
      <Line $h={36} $pad={4}>计算公式</Line>
      <Line $h={36} $pad={4}>1. 接触电势允许值</Line>
      <StepFormula sign="t" />
    </FormulaCell>
    <Cell colSpan={6} $fill="yellow" $bold>1.接触电势允许值</Cell>
  </>,
  <>
    <Cell colSpan={2} $fill="blue" $center $bold> ρ <sub>f</sub></Cell>
    <Cell colSpan={2} $fill="blue" $center $bold>t</Cell>
    <Cell colSpan={2} $fill="blue" $center $bold $err>U<sub>t</sub></Cell>
  </>,
  <>
    <Num span={2} v="400" />
    <Num span={2} v="0.200" />
    <Num span={2} err v="541.128" />
    <td />
    <Selected><Handle /></Selected>
  </>,
  <><Cell colSpan={2} $fill="blue" /><Cell colSpan={2} $fill="blue" /><Err span={2} /></>,
  <>
    <FormulaCell rowSpan={4}>
      <Line $h={40} $pad={4}>2. 跨步电势允许值</Line>
      <Line $h={8} />
      <StepFormula sign="s" />
    </FormulaCell>
    <Cell colSpan={6} $fill="yellow" $bold $size={21}>2.跨步电势允许值</Cell>
  </>,
  <>
    <Cell colSpan={2} $fill="blue" $center $bold> ρ <sub>f</sub></Cell>
    <Cell colSpan={2} $fill="blue" $center $bold>t</Cell>
    <Cell colSpan={2} $fill="blue" $center $bold $err>U<sub>s</sub></Cell>
  </>,
  <>
    <Num span={2} v="200" />
    <Num span={2} v="0.264" />
    <Num span={2} err v="404.819" />
  </>,
  <><Cell colSpan={2} $fill="blue" /><Cell colSpan={2} $fill="blue" /><Err span={2} /></>,
];

function Grid() {
  return (
    <SheetView>
      <Sheet>
        <colgroup>{widths.map((w, i) => <col key={i} width={w} />)}</colgroup>
        <thead>
          <tr>
            <ColHead $corner aria-label="全选"><Icon w={22} h={22}><path d="M22 0v22H0z" fill="#b4b4b4" /></Icon></ColHead>
            {'ABCDEFGHIJKLMNOPQ'.split('').map(c => <ColHead key={c} $on={c === 'I'}>{c}</ColHead>)}
          </tr>
        </thead>
        <tbody>
          {rows.map((cells, i) => (
            <tr key={i}>
              <RowHead $on={i === 22} $h={i === 14 ? 32 : 36}>{i + 1}</RowHead>
              {cells}
            </tr>
          ))}
        </tbody>
      </Sheet>
      <RodPicture />
      <ShapePicture />
    </SheetView>
  );
}

export default function App() {
  return (
    <Window>
      <GlobalStyle />
      <TopBar />
      <RibbonBar />
      <QuickBar>
        <Tool $w={34} aria-label="保存">
          <Icon w={20} h={20}><path d="M0 0h20v20H0z" fill="#8a5bb0" /><path d="M2 1h16v10H2zM6 13h8v6h-2v-4H9v4H6z" fill="#fff" /></Icon>
        </Tool>
        <Tool $w={52} aria-label="撤消"><Icon w={22} h={20} stroke="#aaa" strokeWidth="3"><path d="M3 7h11q7 1 6 7-1 4-7 5M8 1L2 7l6 6" /></Icon></Tool>
        <ChevTool w={2} c="#aaa" />
        <Tool $w={58} aria-label="恢复"><Icon w={22} h={20} stroke="#aaa" strokeWidth="3"><path d="M19 7H8Q1 8 2 14q1 4 7 5M14 1l6 6-6 6" /></Icon></Tool>
        <ChevTool w={0} c="#aaa" />
        <Tool $w={60} aria-label="自定义快速访问工具栏"><Icon w={8} h={8}><path d="M0 0h8v1.500H0zM0 3h8L4 8z" fill="#444" /></Icon></Tool>
      </QuickBar>
      <FormulaBar>
        <Field $w={152}><input aria-label="名称框" defaultValue="I23" /><Caret /></Field>
        <Grip $m="0 22px 0 20px" />
        <Field $w={164}>
          <Tool $w={38} aria-label="取消"><Icon w={18} h={18} stroke="#c0c0c0" strokeWidth="2.500"><path d="M1 1l16 16M16 1L1 17" /></Icon></Tool>
          <Tool $w={72} aria-label="输入"><Icon w={20} h={18} stroke="#c0c0c0" strokeWidth="4"><path d="M1 9l6 6L18 2" /></Icon></Tool>
          <Tool $w={34} $color="#b4b4b4"><Glyph $serif $style="italic">fx</Glyph></Tool>
        </Field>
        <Field>
          <input aria-label="编辑栏" />
          <Icon w={10} h={9} stroke="#777" strokeWidth="3"><path d="M1 1l4 5 4-5" /></Icon>
        </Field>
      </FormulaBar>
      <Main>
        <Grid />
        <VScroll>
          <ScrollBox aria-label="向上"><Icon w={12} h={7}><path d="M0 7h12L6 0z" fill="#666" /></Icon></ScrollBox>
          <VThumb />
          <ScrollBox aria-label="向下"><Icon w={12} h={7}><path d="M0 0h12L6 7z" fill="#666" /></Icon></ScrollBox>
        </VScroll>
      </Main>
      <SheetBar>
        <NavArrow aria-label="上一张"><Icon w={7} h={12}><path d="M7 0v12L0 6z" fill="#b8b8b8" /></Icon></NavArrow>
        <NavArrow aria-label="下一张"><Icon w={7} h={12}><path d="M0 0v12l7-6z" fill="#b8b8b8" /></Icon></NavArrow>
        <TabEdge />
        <SheetTab>接地电阻的计算（手册）</SheetTab>
        <SheetTab $on>接地电阻的计算 (规范)</SheetTab>
        <NavArrow $w={98} aria-label="新工作表"><Icon w={24} h={24} stroke="#b8b8b8" strokeWidth="1.500"><circle cx="12" cy="12" r="10.500" /><path d="M6 12h12M12 6v12" /></Icon></NavArrow>
        <Grip $m="0 0 0 auto" />
        <HScroll>
          <ScrollBox aria-label="向左"><Icon w={7} h={12}><path d="M7 0v12L0 6z" fill="#666" /></Icon></ScrollBox>
          <HThumb />
          <ScrollBox aria-label="向右"><Icon w={7} h={12}><path d="M0 0v12l7-6z" fill="#666" /></Icon></ScrollBox>
        </HScroll>
      </SheetBar>
      <Status>
        <span>就绪</span>
        <Access>
          <Icon w={22} h={24} stroke="#444" strokeWidth="1.800">
            <path d="M8 2q-6 3-6 9 1 8 9 9M8 2v11M5 9l3 4 4-4M13 11q2-3 5-2 4 2 1 6-3 1-3 4M16 21v2M15 3q4 1 5 4" />
          </Icon>
          辅助功能: 不可用
        </Access>
        <ViewButton $on aria-label="普通"><Icon w={20} h={20} stroke="#666"><path d="M.5.500h19v19H.5zM.5 7h19M.5 13h19M7 .5v19M13 .5v19" /></Icon></ViewButton>
        <ViewButton aria-label="页面布局"><Icon w={20} h={20} stroke="#666"><path d="M.5.500h19v19H.5zM5 4h10v12H5zM7 7h6M7 10h6M7 13h6" /></Icon></ViewButton>
        <ViewButton aria-label="分页预览"><Icon w={20} h={20} stroke="#666"><path d="M.5.500h19v19H.5zM7 .5V11M13 .5V11M.5 11H13" /></Icon></ViewButton>
        <Tool $w={25} aria-label="缩小"><Icon w={12} h={2}><path d="M0 0h12v2H0z" fill="#222" /></Icon></Tool>
        <Zoom type="range" min="0" max="100" defaultValue="53" aria-label="缩放" />
        <Tool $w={12} aria-label="放大"><Icon w={12} h={12} stroke="#222" strokeWidth="1.500"><path d="M0 6h12M6 0v12" /></Icon></Tool>
        <Percent>100%</Percent>
        <Watermark>CSDN @工控老马</Watermark>
      </Status>
      <Meter />
    </Window>
  );
}
